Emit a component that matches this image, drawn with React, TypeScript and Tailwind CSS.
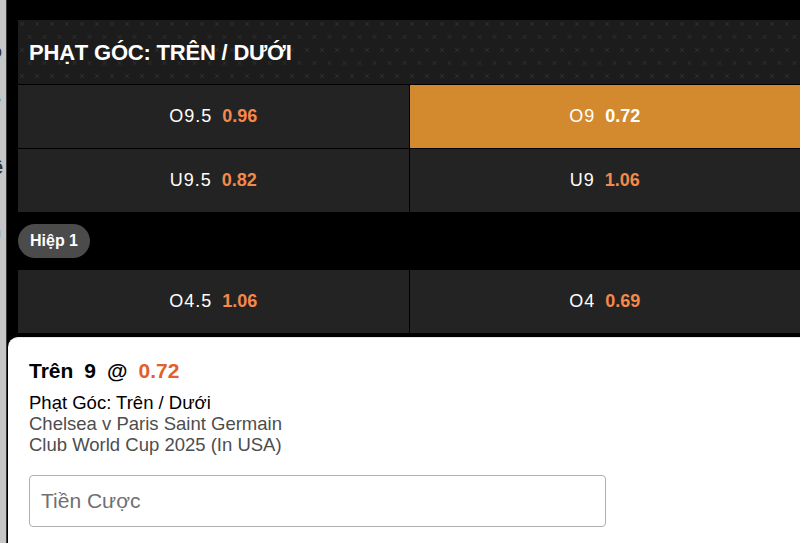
const rows = [
  [
    { label: 'O9.5', odds: '0.96', active: false },
    { label: 'O9', odds: '0.72', active: true },
  ],
  [
    { label: 'U9.5', odds: '0.82', active: false },
    { label: 'U9', odds: '1.06', active: false },
  ],
]

function OddsCell({ label, odds, active }: { label: string; odds: string; active: boolean }) {
  return (
    <div className={`flex h-[63px] items-center justify-center gap-[10px] text-[18px] ${active ? 'bg-[#d38a2f]' : 'bg-[#232323]'}`}>
      <span className="tracking-[1px] text-white">{label}</span>
      <span className={`font-bold ${active ? 'text-white' : 'text-[#f5884a]'}`}>{odds}</span>
    </div>
  )
}

function HeaderPattern() {
  return (
    <svg className="absolute inset-0 h-full w-full" aria-hidden>
      <defs>
        <pattern id="xp" width="15" height="26" patternUnits="userSpaceOnUse">
          <path d="M2 2l4 4M6 2l-4 4" stroke="#2e2e2e" strokeWidth="1" />
          <path d="M9.5 15l4 4M13.5 15l-4 4" stroke="#2e2e2e" strokeWidth="1" />
        </pattern>
      </defs>
      <rect width="100%" height="100%" fill="url(#xp)" />
    </svg>
  )
}

export default function App() {
  return (
    <div className="flex h-[543px] w-[800px] overflow-hidden bg-black font-['Liberation_Sans',Arial,sans-serif]">
      <div className="relative w-[7px] shrink-0 overflow-hidden border-r border-[#3a3a3a] bg-[#c6c6c6] text-[#333]">
        <div className="absolute -left-[6px] top-[-8px] text-[16px]">-</div>
        <div className="absolute -left-[7px] top-[40px] text-[16px]">o</div>
        <div className="absolute -left-[8px] top-[88px] text-[16px]">ễ</div>
        <div className="absolute -left-[8px] top-[152px] text-[20px] font-bold">ề</div>
        <div className="absolute -left-[8px] top-[220px] text-[16px]">h</div>
      </div>

      <div className="relative flex-1">
        <div className="flex flex-col gap-px pl-[11px] pt-[20px]">
          <div className="relative flex h-[64px] items-center bg-[#1c1c1c] px-[11px]">
            <HeaderPattern />
            <h2 className="relative text-[22px] font-bold tracking-[-0.2px] text-white">PHẠT GÓC: TRÊN / DƯỚI</h2>
          </div>

          <div className="grid grid-cols-2 gap-px">
            {rows.flat().map((c) => (
              <OddsCell key={c.label} {...c} />
            ))}
          </div>

          <div className="flex h-[56px] items-center">
            <span className="rounded-full bg-[#4b4b4b] px-[12px] py-[5px] text-[16px] font-bold text-white">Hiệp 1</span>
          </div>

          <div className="grid grid-cols-2 gap-px">
            <OddsCell label="O4.5" odds="1.06" active={false} />
            <OddsCell label="O4" odds="0.69" active={false} />
          </div>
        </div>

        <div className="absolute bottom-0 left-[1px] right-0 top-[337px] rounded-tl-[10px] border-t border-[#e6e6e6] bg-white pl-[21px] pt-[21px]">
          <div className="flex items-baseline gap-[11px] text-[21px] font-bold leading-[24px] text-black">
            <span>Trên</span>
            <span>9</span>
            <span>@</span>
            <span className="text-[#e2602a]">0.72</span>
          </div>
          <p className="mt-[10px] text-[18.5px] leading-[20px] text-black">Phạt Góc: Trên / Dưới</p>
          <p className="text-[18.5px] leading-[21px] text-[#4d4d4d]">Chelsea v Paris Saint Germain</p>
          <p className="text-[18.5px] leading-[21px] text-[#4d4d4d]">Club World Cup 2025 (In USA)</p>
          <input
            placeholder="Tiền Cược"
            className="mt-[20px] h-[52px] w-[577px] rounded-[4px] border border-[#b0b0b0] px-[11px] text-[21px] text-black outline-none placeholder:text-[#707070]"
          />
        </div>
      </div>
    </div>
  )
}
